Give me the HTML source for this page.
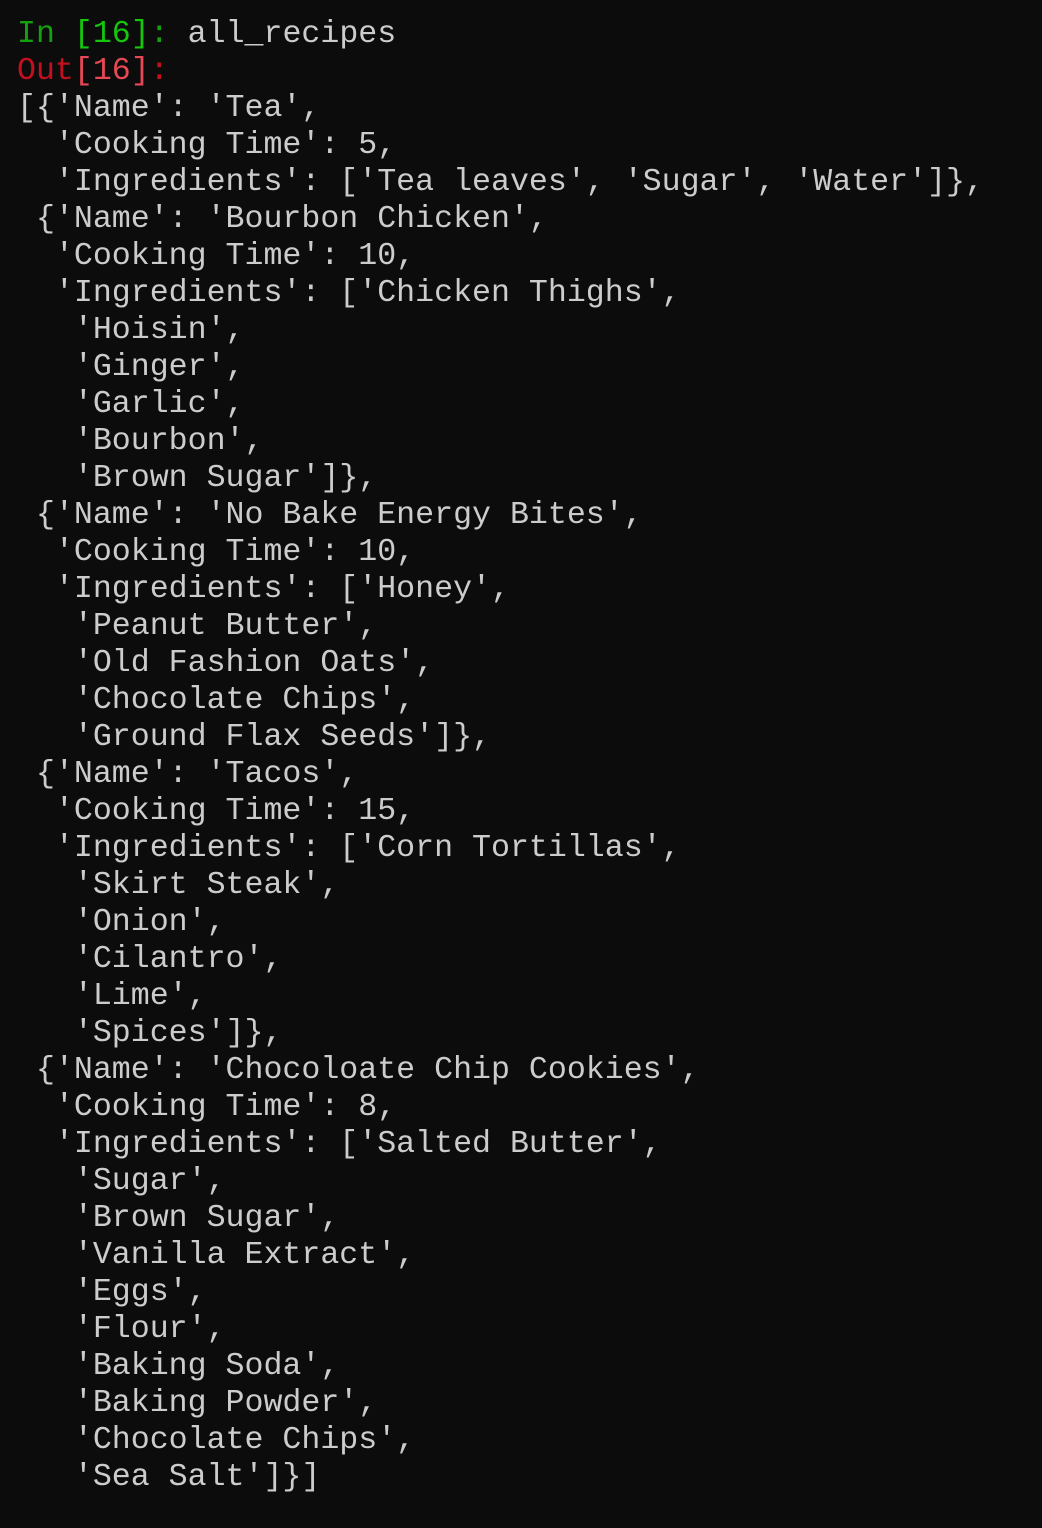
<!DOCTYPE html>
<html><head><meta charset="utf-8"><style>
html,body{margin:0;padding:0;background:#0c0c0c;width:1042px;height:1528px;overflow:hidden}
pre{margin:0;position:absolute;left:17px;top:16px;font-family:"Liberation Mono","DejaVu Sans Mono",monospace;font-size:31.6px;line-height:37px;color:#cccccc}
.g{color:#13a10e}.G{color:#16c60c}.r{color:#c50f1f}.R{color:#e74856}
</style></head><body><pre><span class="g">In </span><span class="G">[16]</span><span class="g">:</span> all_recipes
<span class="r">Out</span><span class="R">[16]</span><span class="r">:</span>
[{'Name': 'Tea',
  'Cooking Time': 5,
  'Ingredients': ['Tea leaves', 'Sugar', 'Water']},
 {'Name': 'Bourbon Chicken',
  'Cooking Time': 10,
  'Ingredients': ['Chicken Thighs',
   'Hoisin',
   'Ginger',
   'Garlic',
   'Bourbon',
   'Brown Sugar']},
 {'Name': 'No Bake Energy Bites',
  'Cooking Time': 10,
  'Ingredients': ['Honey',
   'Peanut Butter',
   'Old Fashion Oats',
   'Chocolate Chips',
   'Ground Flax Seeds']},
 {'Name': 'Tacos',
  'Cooking Time': 15,
  'Ingredients': ['Corn Tortillas',
   'Skirt Steak',
   'Onion',
   'Cilantro',
   'Lime',
   'Spices']},
 {'Name': 'Chocoloate Chip Cookies',
  'Cooking Time': 8,
  'Ingredients': ['Salted Butter',
   'Sugar',
   'Brown Sugar',
   'Vanilla Extract',
   'Eggs',
   'Flour',
   'Baking Soda',
   'Baking Powder',
   'Chocolate Chips',
   'Sea Salt']}]</pre></body></html>
